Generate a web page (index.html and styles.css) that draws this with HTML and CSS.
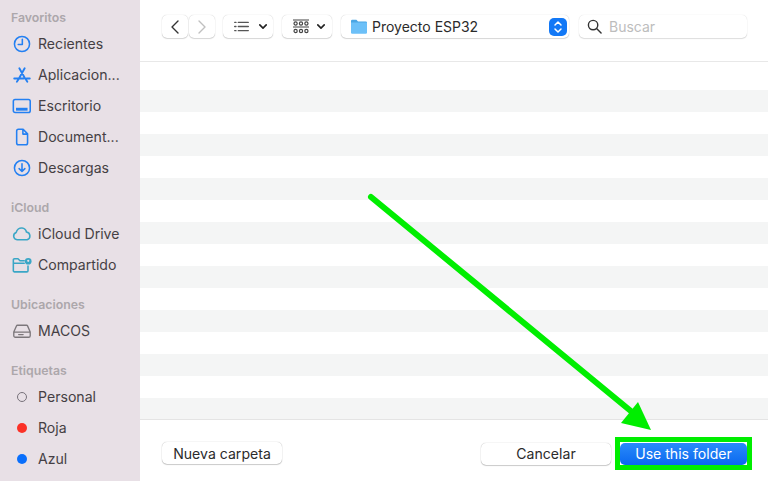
FILE: index.html
```html
<!DOCTYPE html>
<html lang="es">
<head>
<meta charset="utf-8">
<title>Proyecto ESP32</title>
<link rel="stylesheet" href="styles.css">
</head>
<body>
<div class="dialog">
  <aside class="sidebar">
    <section class="group">
      <h2 class="group-title">Favoritos</h2>
      <div class="item"><svg class="icon blue" viewBox="0 0 18 18"><circle cx="9" cy="9" r="6.8"/><path d="M9.3 4.8V9.4H5.6"/></svg><span class="label">Recientes</span></div>
      <div class="item"><svg class="icon blue strong" viewBox="0 0 18 18"><path d="M6.6 3 11.8 12.2M11.4 3 6 12.6 4.4 15M2 12.2H10.4M13.2 12.2H16M12.4 12.8 13.8 15"/></svg><span class="label">Aplicacion...</span></div>
      <div class="item"><svg class="icon blue" viewBox="0 0 18 18"><rect x="1.2" y="3.2" width="15.2" height="11.6" rx="1.6"/><path class="thick" d="M3.6 11.9H14"/></svg><span class="label">Escritorio</span></div>
      <div class="item"><svg class="icon blue" viewBox="0 0 18 18"><path d="M4.2 3.6A1.6 1.6 0 0 1 5.8 2H10L14 6.2V14.4A1.6 1.6 0 0 1 12.4 16H5.8A1.6 1.6 0 0 1 4.2 14.4ZM9.8 2.2V6.4H14"/></svg><span class="label">Document...</span></div>
      <div class="item"><svg class="icon blue" viewBox="0 0 18 18"><circle cx="9" cy="9" r="6.8"/><path d="M9 5.2V12.2M6.4 9.6 9 12.2 11.6 9.6"/></svg><span class="label">Descargas</span></div>
    </section>
    <section class="group">
      <h2 class="group-title">iCloud</h2>
      <div class="item"><svg class="icon teal" viewBox="0 0 18 18"><path d="M4.6 14.2A3.4 3.4 0 0 1 3.8 7.6 5 5 0 0 1 9 3.6 4.6 4.6 0 0 1 13 7.2 3.6 3.6 0 0 1 13.6 14.2Z"/></svg><span class="label">iCloud Drive</span></div>
      <div class="item"><svg class="icon teal" viewBox="0 0 18 18"><path d="M14.4 10V14.2A1 1 0 0 1 13.4 15.2H2.2A1 1 0 0 1 1.2 14.2V4.4A1 1 0 0 1 2.2 3.4H5.4L7.2 5.2H11M1.2 7.4H11"/><circle class="solid" cx="14.6" cy="5.6" r="3"/><circle class="hole" cx="14.6" cy="5.2" r="1"/></svg><span class="label">Compartido</span></div>
    </section>
    <section class="group">
      <h2 class="group-title">Ubicaciones</h2>
      <div class="item"><svg class="icon gray" viewBox="0 0 18 18"><path d="M1.6 10 4 4.4A1 1 0 0 1 5 3.8H13A1 1 0 0 1 14 4.4L16.4 10V13.2A1.4 1.4 0 0 1 15 14.6H3A1.4 1.4 0 0 1 1.6 13.2ZM1.6 10H16.4M6 12.2H10"/></svg><span class="label">MACOS</span></div>
    </section>
    <section class="group">
      <h2 class="group-title">Etiquetas</h2>
      <div class="item"><span class="tag-slot"><span class="tag tag-empty"></span></span><span class="label">Personal</span></div>
      <div class="item"><span class="tag-slot"><span class="tag tag-red"></span></span><span class="label">Roja</span></div>
      <div class="item"><span class="tag-slot"><span class="tag tag-blue"></span></span><span class="label">Azul</span></div>
    </section>
  </aside>

  <main class="main">
    <header class="toolbar">
      <div class="nav-pair">
        <div class="tb-btn nav-btn"><svg class="tb-icon" viewBox="0 0 14 16"><path d="M10 2 4 8 10 14"/></svg></div>
        <div class="tb-btn nav-btn"><svg class="tb-icon faded" viewBox="0 0 14 16"><path d="M4 2 10 8 4 14"/></svg></div>
      </div>
      <div class="tb-btn list-btn">
        <svg class="tb-icon list-icon" viewBox="0 0 16 12"><path d="M4.5 1.5H15.5M4.5 6H15.5M4.5 10.5H15.5M.5 1.5H2M.5 6H2M.5 10.5H2"/></svg>
        <svg class="tb-icon chevron" viewBox="0 0 10 6"><path d="M1 1 5 5 9 1"/></svg>
      </div>
      <div class="tb-btn grid-btn">
        <svg class="tb-icon grid-icon" viewBox="0 0 16 16"><path class="rule" d="M.5 1H15.5M.5 8H15.5"/><circle cx="2.6" cy="4.5" r="1.6"/><circle cx="8" cy="4.5" r="1.6"/><circle cx="13.4" cy="4.5" r="1.6"/><circle cx="2.6" cy="12" r="1.6"/><circle cx="8" cy="12" r="1.6"/><circle cx="13.4" cy="12" r="1.6"/></svg>
        <svg class="tb-icon chevron" viewBox="0 0 10 6"><path d="M1 1 5 5 9 1"/></svg>
      </div>
      <div class="tb-btn path-btn">
        <svg class="folder" viewBox="0 0 16 15"><path class="folder-back" d="M0 2A1.2 1.2 0 0 1 1.2 .8H5.4L7 2.4H14.8A1.2 1.2 0 0 1 16 3.6V6H0Z"/><path class="folder-front" d="M0 3.6H16V13.6A1.2 1.2 0 0 1 14.8 14.8H1.2A1.2 1.2 0 0 1 0 13.6Z"/></svg>
        <span class="path-name">Proyecto ESP32</span>
        <span class="stepper"><svg viewBox="0 0 10 14"><path d="M2 5 5 2 8 5M2 9 5 12 8 9"/></svg></span>
      </div>
      <div class="tb-btn search">
        <svg class="tb-icon search-icon" viewBox="0 0 16 16"><circle cx="6.5" cy="6.5" r="5"/><path d="M10.2 10.2 15 15"/></svg>
        <span class="search-text">Buscar</span>
      </div>
    </header>

    <div class="file-list">
      <div class="row"></div><div class="row"></div><div class="row"></div><div class="row"></div>
      <div class="row"></div><div class="row"></div><div class="row"></div><div class="row"></div>
      <div class="row"></div><div class="row"></div><div class="row"></div><div class="row"></div>
      <div class="row"></div><div class="row"></div><div class="row"></div><div class="row"></div>
    </div>

    <footer class="footer">
      <button class="btn new-folder">Nueva carpeta</button>
      <div class="actions">
        <button class="btn cancel">Cancelar</button>
        <div class="highlight"><button class="btn primary">Use this folder</button></div>
      </div>
    </footer>
  </main>

  <svg class="arrow" viewBox="0 0 768 481"><path class="arrow-line" d="M371 197 632 412"/><path class="arrow-head" d="M651 430 621 423 638 402Z"/></svg>
</div>
</body>
</html>
```

FILE: styles.css
```css
* { box-sizing: border-box; }
html, body { margin: 0; height: 100%; }
body { font-family: Inter, "Liberation Sans", sans-serif; background: #fff; overflow: hidden; }

.dialog { position: relative; display: flex; width: 768px; height: 481px; overflow: hidden; }

/* sidebar */
.sidebar { width: 140px; flex: none; background: #e8e0e6; padding: 7px 0 0 11px; display: flex; flex-direction: column; gap: 14px; }
.group-title { margin: 0; height: 21px; line-height: 21px; font-size: 12.3px; font-weight: 600; color: #aca7ab; }
.item { display: flex; align-items: center; height: 31px; }
.icon { width: 20px; height: 20px; flex: none; margin-left: 1px; fill: none; stroke-width: 1.4; stroke-linecap: round; stroke-linejoin: round; }
.icon.blue { stroke: #2480f2; }
.icon.strong { stroke-width: 1.7; }
.icon.teal { stroke: #3aa6c6; }
.icon.gray { stroke: #7c777b; stroke-width: 1.2; }
.icon .thick { stroke-width: 2.6; stroke-linecap: butt; }
.icon .solid { fill: #3aa6c6; stroke: none; }
.icon .hole { fill: #e8e0e6; stroke: none; }
.label { margin-left: 6px; padding-bottom: 1px; font-size: 14.1px; color: #453f44; white-space: nowrap; }
.tag-slot { width: 20px; flex: none; margin-left: 1px; display: flex; justify-content: center; }
.tag { width: 10px; height: 10px; border-radius: 50%; }
.tag-empty { border: 1.4px solid #77727a; }
.tag-red { background: #fb3127; }
.tag-blue { background: #0a6ffc; }

/* main */
.main { flex: 1; min-width: 0; display: flex; flex-direction: column; }
.toolbar { height: 62px; flex: none; border-bottom: 1px solid #e8e8e8; padding: 15px 0 0 22px; display: flex; align-items: flex-start; }
.tb-btn { height: 23px; background: #fff; border-radius: 5px; box-shadow: 0 0 1px rgba(0,0,0,.25), 0 1px 1px rgba(0,0,0,.14); display: flex; align-items: center; }
.nav-pair { display: flex; gap: 1px; }
.nav-btn { width: 26px; justify-content: center; }
.tb-icon { fill: none; stroke: #333; stroke-width: 1.4; stroke-linecap: round; stroke-linejoin: round; }
.nav-btn .tb-icon { width: 14px; height: 16px; }
.faded { stroke: #c0c0c0; }
.list-btn { width: 50px; margin-left: 8px; padding-left: 11px; }
.list-icon { width: 15px; height: 11px; stroke: #555; }
.chevron { width: 8px; height: 5px; margin-left: 10px; stroke: #222; stroke-width: 2; }
.grid-btn { width: 50px; margin-left: 9px; padding-left: 11px; }
.grid-icon { width: 16px; height: 16px; stroke: #444; stroke-width: 1.2; }
.grid-btn .chevron { margin-left: 8px; }
.path-btn { width: 228px; margin-left: 9px; padding-left: 10px; }
.folder { width: 16px; height: 15px; flex: none; }
.folder-back { fill: #4aa6e4; }
.folder-front { fill: #6cc0f8; }
.path-name { margin-left: 5px; font-size: 14px; color: #2b2b2b; white-space: nowrap; }
.stepper { margin-left: auto; margin-right: 2px; width: 18px; height: 18px; border-radius: 5px; background: #1278f6; display: flex; align-items: center; justify-content: center; }
.stepper svg { width: 10px; height: 14px; fill: none; stroke: #fff; stroke-width: 1.5; stroke-linecap: round; stroke-linejoin: round; }
.search { width: 168px; margin-left: 10px; padding-left: 8px; box-shadow: 0 0 1px rgba(0,0,0,.18), 0 1px 1px rgba(0,0,0,.12); }
.search-icon { width: 15px; height: 15px; stroke-width: 1.5; }
.search-text { margin-left: 7px; font-size: 14px; color: #bdbdbd; }

.file-list { height: 358px; flex: none; overflow: hidden; border-bottom: 1px solid #e4e4e4; padding-top: 6px; }
.row { height: 22px; }
.row:nth-child(even) { background: #f4f5f5; }

.footer { flex: 1; display: flex; justify-content: space-between; align-items: flex-start; padding: 22px 16px 0 22px; }
.btn { font: inherit; font-size: 14.1px; border: 0; height: 22px; padding: 0; background: #fff; color: #2b2b2b; border-radius: 5px; box-shadow: 0 0 1px rgba(0,0,0,.35), 0 1px 1px rgba(0,0,0,.18); }
.new-folder { width: 120px; }
.actions { display: flex; align-items: center; gap: 4px; margin-top: -5px; }
.cancel { width: 130px; }
.highlight { width: 137px; height: 33px; border: 5px solid #00ee00; display: flex; align-items: center; justify-content: center; }
.primary { width: 127px; height: 22px; color: #fff; background: linear-gradient(#2a8bfa, #0a68f0); box-shadow: none; }

/* annotation drawn over the dialog */
.arrow { position: absolute; left: 0; top: 0; width: 768px; height: 481px; pointer-events: none; }
.arrow-line { fill: none; stroke: #00ee00; stroke-width: 6; stroke-linecap: round; }
.arrow-head { fill: #00ee00; }
```
